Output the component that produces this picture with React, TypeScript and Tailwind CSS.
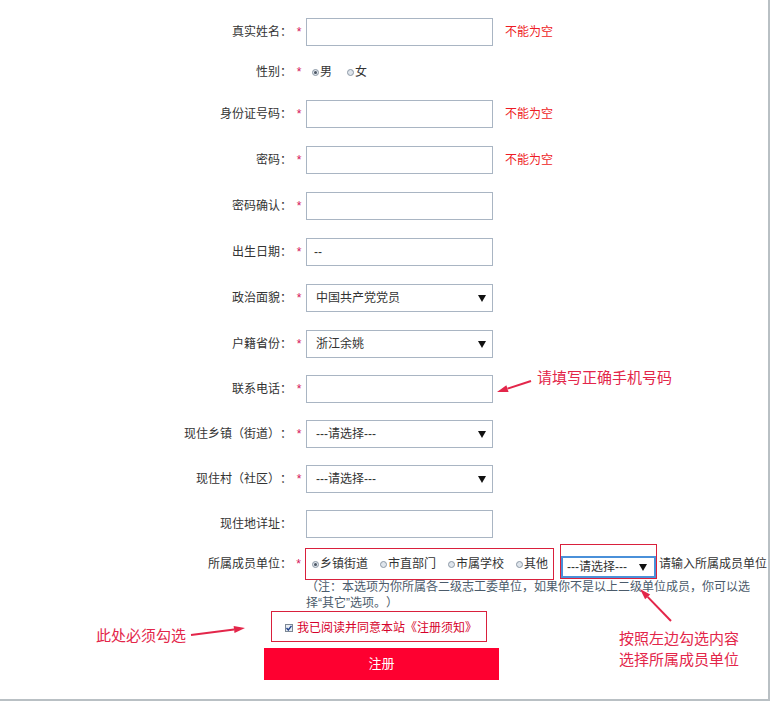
type Row = {
  label: string;
  star: boolean;
  kind: 'input' | 'select' | 'gender';
  value?: string;
  err?: string;
  mt: string;
};

const rows: Row[] = [
  { label: '真实姓名：', star: true, kind: 'input', err: '不能为空', mt: 'mt-[18px]' },
  { label: '性别：', star: true, kind: 'gender', mt: 'mt-[12px]' },
  { label: '身份证号码：', star: true, kind: 'input', err: '不能为空', mt: 'mt-[14px]' },
  { label: '密码：', star: true, kind: 'input', err: '不能为空', mt: 'mt-[18px]' },
  { label: '密码确认：', star: true, kind: 'input', mt: 'mt-[18px]' },
  { label: '出生日期：', star: true, kind: 'input', value: '--', mt: 'mt-[18px]' },
  { label: '政治面貌：', star: true, kind: 'select', value: '中国共产党党员', mt: 'mt-[18px]' },
  { label: '户籍省份：', star: true, kind: 'select', value: '浙江余姚', mt: 'mt-[18px]' },
  { label: '联系电话：', star: true, kind: 'input', mt: 'mt-[17px]' },
  { label: '现住乡镇（街道）：', star: true, kind: 'select', value: '---请选择---', mt: 'mt-[17px]' },
  { label: '现住村（社区）：', star: true, kind: 'select', value: '---请选择---', mt: 'mt-[17px]' },
  { label: '现住地详址：', star: false, kind: 'input', mt: 'mt-[17px]' },
];

const Caret = () => (
  <svg width="8" height="8" viewBox="0 0 8 8" className="shrink-0">
    <path d="M0 1 L8 1 L4 8 Z" fill="#111" />
  </svg>
);

const Radio = ({ checked }: { checked?: boolean }) => (
  <span className="shrink-0 w-[7px] h-[7px] rounded-full border border-[#8d99a6] bg-[#dfe5ec] flex items-center justify-center">
    {checked && <span className="w-[3px] h-[3px] rounded-full bg-[#4b5563]" />}
  </span>
);

// arrow drawn tail -> tip, head computed from direction
const Arrow = ({ x1, y1, x2, y2 }: { x1: number; y1: number; x2: number; y2: number }) => {
  const len = Math.hypot(x2 - x1, y2 - y1);
  const ux = (x2 - x1) / len;
  const uy = (y2 - y1) / len;
  const hl = 11;
  const hw = 3.5;
  const bx = x2 - ux * hl;
  const by = y2 - uy * hl;
  const pts = `${x2},${y2} ${bx - uy * hw},${by + ux * hw} ${bx + uy * hw},${by - ux * hw}`;
  return (
    <g>
      <line x1={x1} y1={y1} x2={bx} y2={by} stroke="#e3264a" strokeWidth="2" />
      <polygon points={pts} fill="#e3264a" />
    </g>
  );
};

export default function App() {
  return (
    <div className="relative w-[770px] h-[701px] bg-white border-r-2 border-b-2 border-[#b9c0c4] font-['Liberation_Sans','Noto_Sans_CJK_SC',sans-serif] text-[12px] text-[#333] [text-spacing-trim:space-all]">
      <div className="flex flex-col">
        {rows.map((r) => (
          <div key={r.label} className={`flex items-center h-[28px] ${r.mt}`}>
            <div className="w-[292px] text-right whitespace-nowrap">{r.label}</div>
            <div className="w-[14px] text-center text-[#d4145a]">{r.star ? '*' : ''}</div>
            {r.kind === 'gender' ? (
              <div className="flex items-center pl-[6px]">
                <Radio checked />
                <span className="ml-[1px]">男</span>
                <span className="ml-[15px]"><Radio /></span>
                <span className="ml-[1px]">女</span>
              </div>
            ) : r.kind === 'select' ? (
              <div className="w-[187px] h-[28px] border border-[#a9b5c3] flex items-center justify-between pl-[9px] pr-[6px]">
                <span>{r.value}</span>
                <Caret />
              </div>
            ) : (
              <div className="w-[187px] h-[28px] border border-[#a9b5c3] flex items-center pl-[7px]">
                {r.value}
              </div>
            )}
            {r.err && <span className="ml-[12px] text-[#ee1c25]">{r.err}</span>}
          </div>
        ))}

        <div className="flex items-center h-[32px] mt-[10px]">
          <div className="w-[292px] text-right whitespace-nowrap">所属成员单位：</div>
          <div className="w-[13px] text-center text-[#d4145a]">*</div>
          <div className="shrink-0 w-[249px] h-[32px] border border-[#d9203c] flex items-center pl-[6px] gap-[12px] whitespace-nowrap">
            {['乡镇街道', '市直部门', '市属学校', '其他'].map((t, i) => (
              <div key={t} className="flex items-center gap-[1px] shrink-0">
                <Radio checked={i === 0} />
                <span>{t}</span>
              </div>
            ))}
          </div>
          <div className="shrink-0 ml-[6px] -mt-[4px] w-[97px] h-[35px] border border-[#d9203c] flex items-end self-start">
            <div className="w-[95px] h-[22px] border-2 border-[#4a90d9] flex items-center justify-between pl-[4px] pr-[7px] bg-white whitespace-nowrap">
              <span>---请选择---</span>
              <Caret />
            </div>
          </div>
          <span className="ml-[2px] whitespace-nowrap">请输入所属成员单位</span>
        </div>

        <div className="ml-[306px] leading-[16px] text-[#4b5b6b] mt-[-1px] whitespace-nowrap">
          （注：本选项为你所属各二级志工委单位，如果你不是以上二级单位成员，你可以选
          <br />
          择“其它”选项。）
        </div>

        <div className="ml-[271px] mt-0 w-[216px] h-[31px] border border-[#d9203c] flex items-end pb-[4px] pl-[13px]">
          <div className="flex items-center gap-[4px]">
            <span className="w-[8px] h-[8px] border border-[#7d8894] bg-[#e8edf3] flex items-center justify-center">
              <svg width="6" height="6" viewBox="0 0 6 6">
                <path d="M0.5 3 L2.3 5 L5.5 0.8" stroke="#1f3f8a" strokeWidth="1.4" fill="none" />
              </svg>
            </span>
            <span className="text-[#d6002a]">我已阅读并同意本站《注册须知》</span>
          </div>
        </div>

        <button className="ml-[264px] mt-[6px] w-[235px] h-[32px] bg-[#fe0030] text-white text-[13px]">
          注册
        </button>
      </div>

      <div className="absolute left-[537px] top-[368px] text-[15px] leading-[20px] text-[#e3264a] whitespace-nowrap">
        请填写正确手机号码
      </div>
      <div className="absolute left-[96px] top-[626px] text-[15px] leading-[20px] text-[#e3264a] whitespace-nowrap">
        此处必须勾选
      </div>
      <div className="absolute left-[619px] top-[628px] text-[15px] leading-[21px] text-[#e3264a] whitespace-nowrap">
        按照左边勾选内容
        <br />
        选择所属成员单位
      </div>

      <svg className="absolute left-0 top-0 pointer-events-none" width="770" height="706">
        <Arrow x1={531} y1={381} x2={497} y2={392} />
        <Arrow x1={191} y1={635} x2={245} y2={628} />
        <Arrow x1={671} y1={621} x2={640} y2={589} />
      </svg>
    </div>
  );
}
